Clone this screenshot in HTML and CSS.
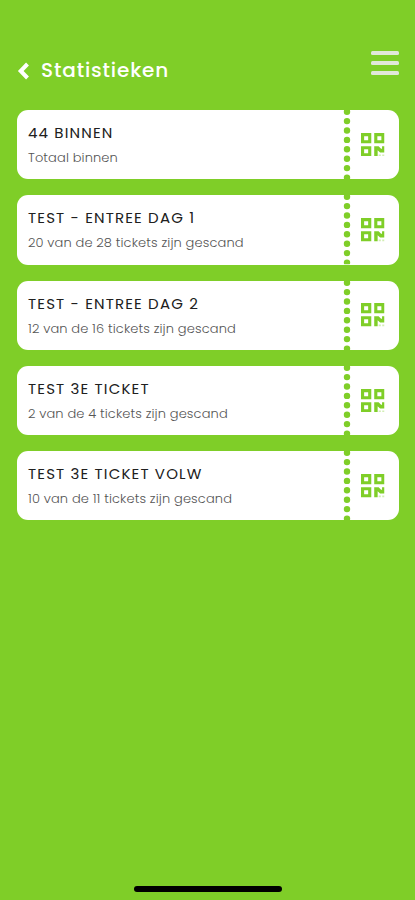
FILE: index.html
```html
<!DOCTYPE html>
<html lang="nl">
<head>
<meta charset="utf-8">
<title>Statistieken</title>
<link rel="stylesheet" href="styles.css">
</head>
<body>
<svg class="defs" aria-hidden="true">
  <symbol id="qr" viewBox="0 0 24 24">
    <path fill-rule="evenodd" d="M0 0h10.500v10.500H0zM3.200 3.200v4.100h4.100V3.200zM13.500 0H24v10.500H13.500zM16.700 3.200v4.100h4.100V3.200zM0 13.500h10.500V24H0zM3.200 16.700v4.100h4.100v-4.100z"/>
    <path d="M13.500 13.500h4.500l2.500 2.500h1v-2.500H24v6.500h-4.500l-2.500-2.300V24h-3.500z"/>
    <path class="faint" d="M18 22h2.300v2H18zM21.700 22H24v2h-2.300z"/>
  </symbol>
  <symbol id="perforation" viewBox="0 0 8 69.300">
    <path d="M4 1.700h0M4 11.100h0M4 20.500h0M4 29.900h0M4 39.300h0M4 48.700h0M4 58.100h0M4 67.600h0"/>
  </symbol>
</svg>
<main class="screen">
  <header class="header">
    <svg class="back" viewBox="0 0 13 18"><path d="M10.500 2L3.700 9L10.500 16"/></svg>
    <h1 class="heading">Statistieken</h1>
    <div class="menu"><i></i><i></i><i></i></div>
  </header>
  <section class="tickets">
    <article class="ticket">
      <div class="info"><h2>44 BINNEN</h2><p>Totaal binnen</p></div>
      <svg class="perforation"><use href="#perforation"/></svg>
      <div class="stub"><svg class="qr"><use href="#qr"/></svg></div>
    </article>
    <article class="ticket">
      <div class="info"><h2>TEST - ENTREE DAG 1</h2><p>20 van de 28 tickets zijn gescand</p></div>
      <svg class="perforation"><use href="#perforation"/></svg>
      <div class="stub"><svg class="qr"><use href="#qr"/></svg></div>
    </article>
    <article class="ticket">
      <div class="info"><h2>TEST - ENTREE DAG 2</h2><p>12 van de 16 tickets zijn gescand</p></div>
      <svg class="perforation"><use href="#perforation"/></svg>
      <div class="stub"><svg class="qr"><use href="#qr"/></svg></div>
    </article>
    <article class="ticket">
      <div class="info"><h2>TEST 3E TICKET</h2><p>2 van de 4 tickets zijn gescand</p></div>
      <svg class="perforation"><use href="#perforation"/></svg>
      <div class="stub"><svg class="qr"><use href="#qr"/></svg></div>
    </article>
    <article class="ticket">
      <div class="info"><h2>TEST 3E TICKET VOLW</h2><p>10 van de 11 tickets zijn gescand</p></div>
      <svg class="perforation"><use href="#perforation"/></svg>
      <div class="stub"><svg class="qr"><use href="#qr"/></svg></div>
    </article>
  </section>
  <div class="home"></div>
</main>
</body>
</html>
```
FILE: styles.css
```css
* { box-sizing: border-box; margin: 0; padding: 0; }
body { background: #7fce28; font-family: Poppins, Lato, sans-serif; }
.defs { display: block; width: 0; height: 0; }
.screen { height: 900px; padding: 50px 16px 8.500px 16.500px; display: flex; flex-direction: column; }
.header { height: 60px; display: flex; align-items: flex-start; }
.back { width: 13px; height: 18px; margin: 11.500px 0 0 .5px; fill: none; stroke: #fff; stroke-width: 4; }
.heading { margin: 6px 0 0 11px; font-size: 20px; line-height: 28px; font-weight: 500; letter-spacing: .85px; color: #fff; white-space: nowrap; }
.menu { margin: 1px 0 0 auto; width: 28px; display: flex; flex-direction: column; gap: 5.700px; }
.menu i { height: 4.200px; border-radius: 1.500px; background: #e2e8d9; }
.tickets { display: flex; flex-direction: column; gap: 16px; }
.ticket { height: 69.300px; display: flex; background: #fff; border-radius: 11px; }
.info { flex: 1; padding: 12px 0 0 11.500px; white-space: nowrap; }
.info h2 { font-size: 15px; line-height: 22px; font-weight: 400; letter-spacing: 1.160px; color: #202020; }
.info p { margin-top: 4px; font-size: 13px; line-height: 20px; font-weight: 300; letter-spacing: .12px; color: #555; }
.perforation { width: 8px; height: 69.300px; fill: none; stroke: #7fce28; stroke-width: 6.400; stroke-linecap: round; }
.stub { width: 48px; display: flex; align-items: center; padding-left: 10px; }
.qr { width: 23.500px; height: 23.500px; fill: #7fce28; }
.faint { opacity: .35; }
.home { width: 148px; height: 5.500px; margin: auto auto 0 117.500px; border-radius: 3px; background: #000; }
```
